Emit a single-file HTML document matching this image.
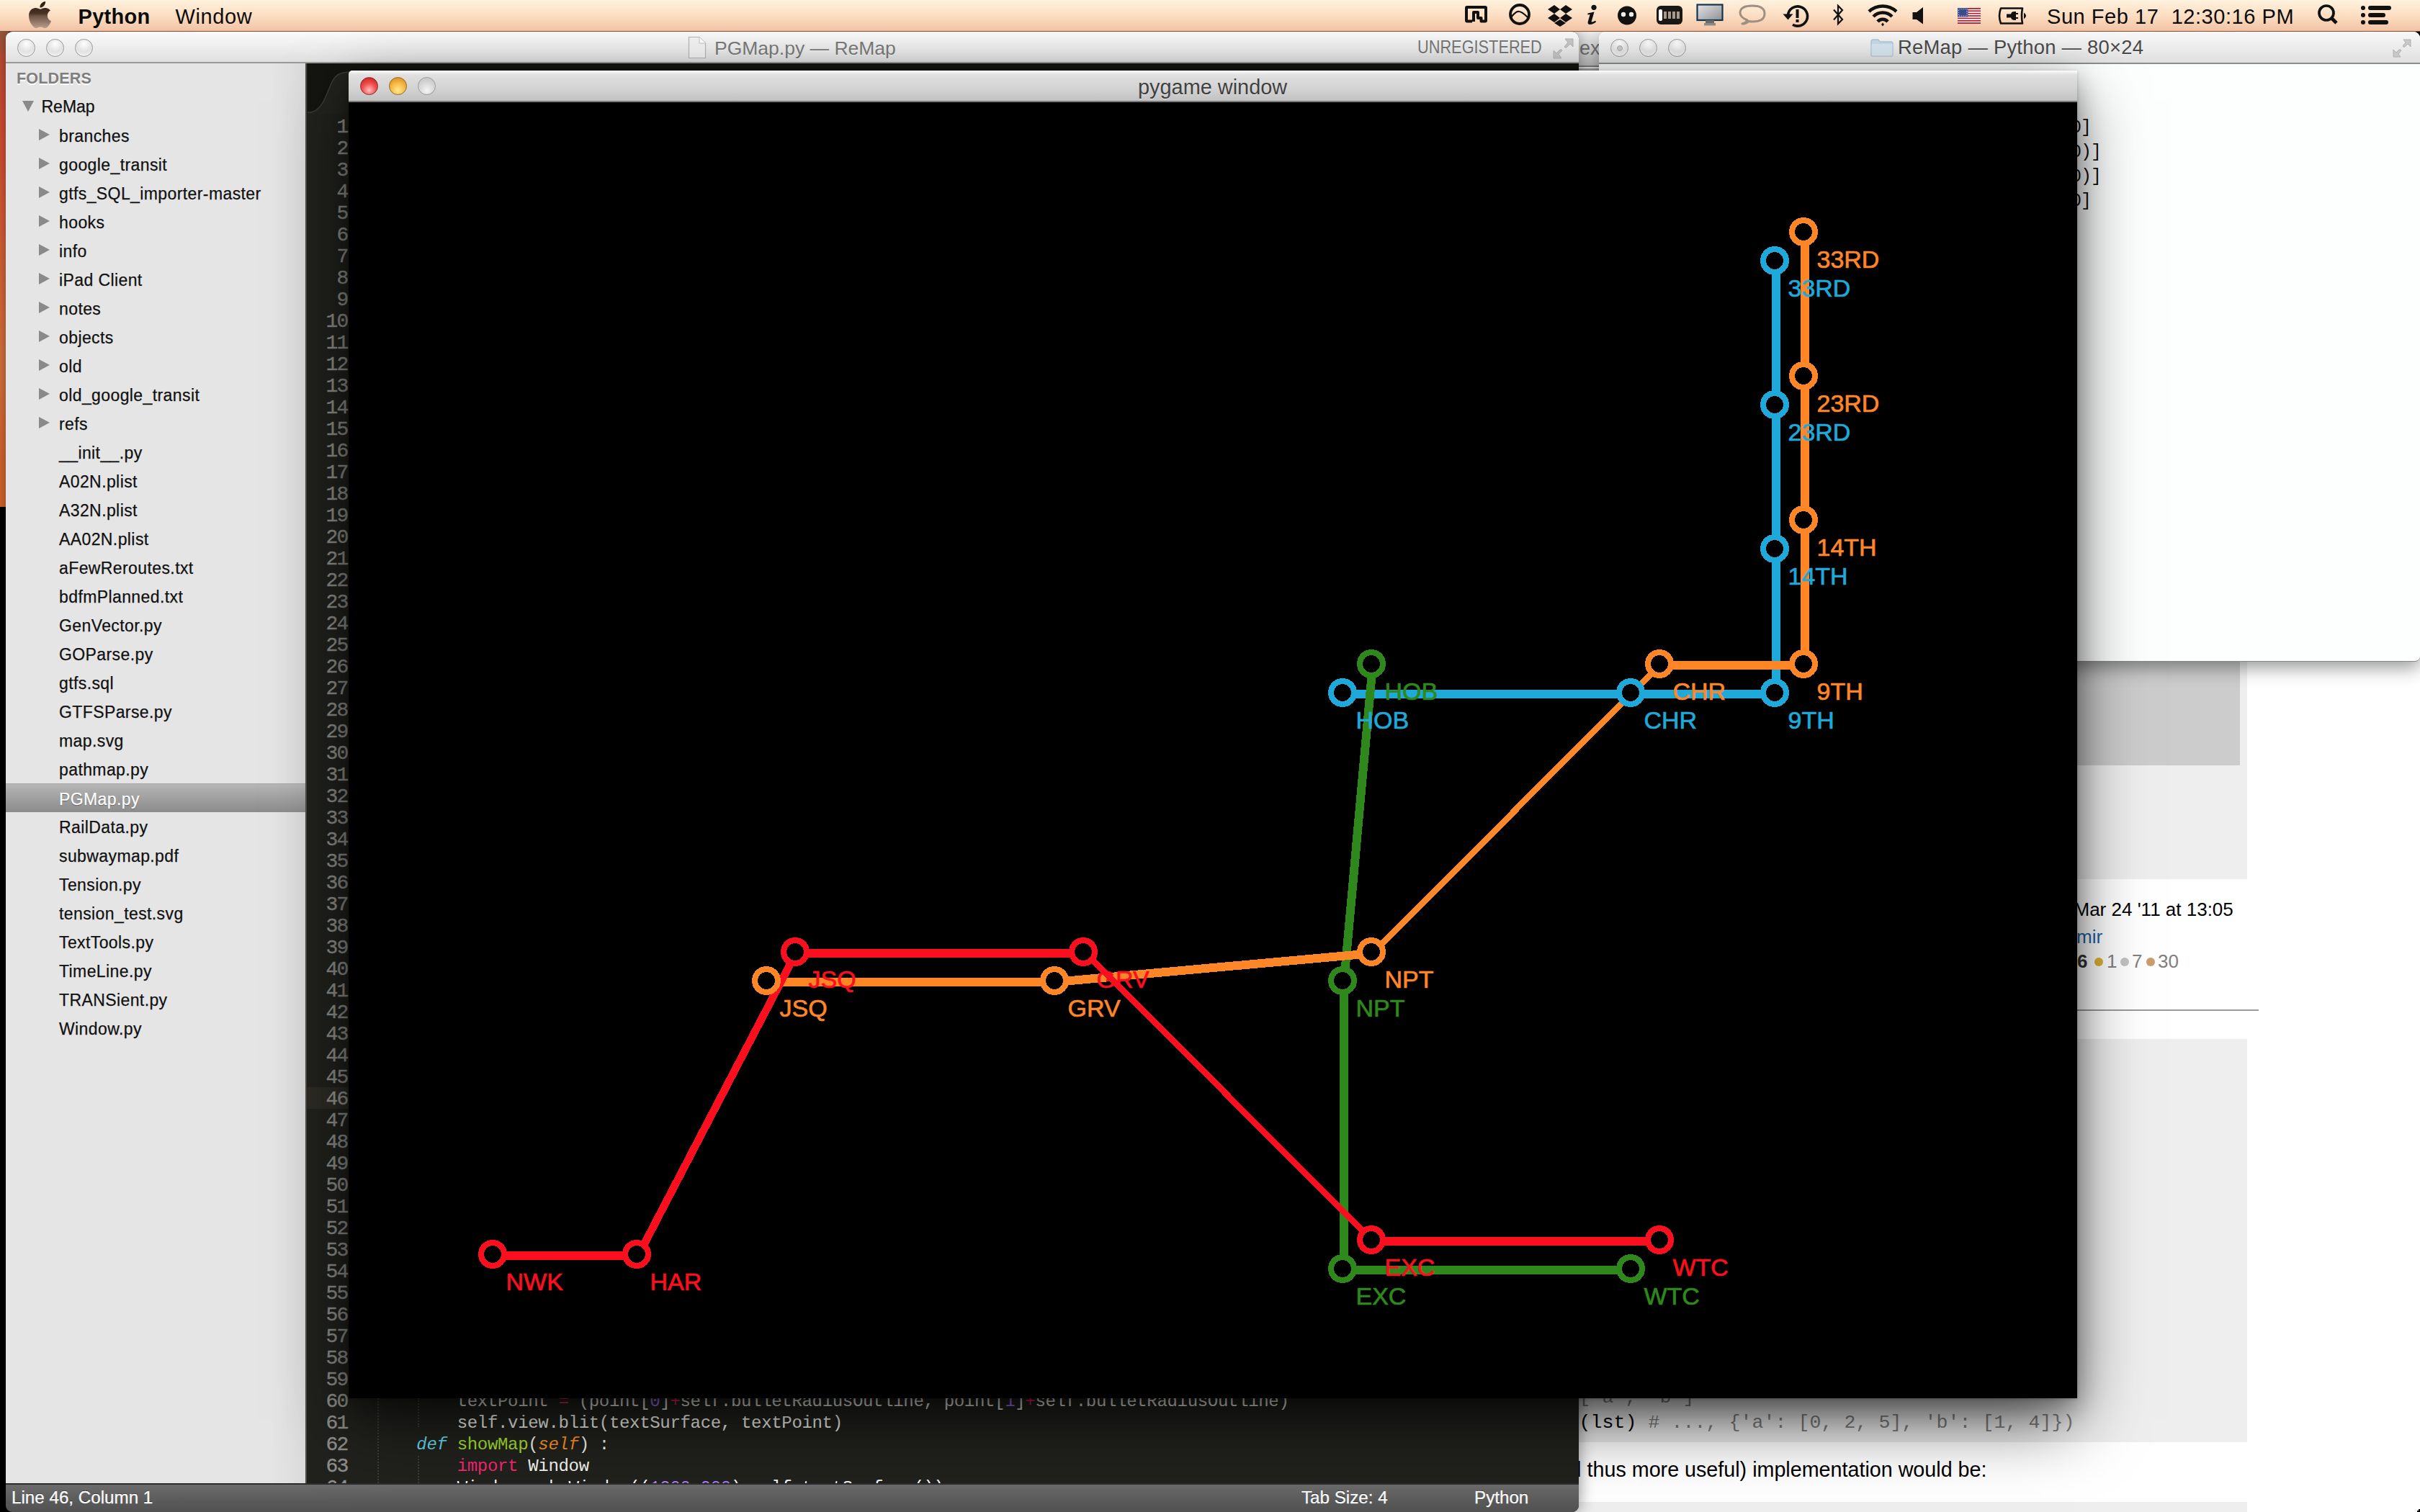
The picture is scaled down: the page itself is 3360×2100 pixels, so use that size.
<!DOCTYPE html>
<html><head><meta charset="utf-8">
<style>
*{margin:0;padding:0;box-sizing:border-box}
html,body{width:3360px;height:2100px;overflow:hidden;background:#000;position:relative;font-family:"Liberation Sans",sans-serif}
/* desktop */
#desk{position:absolute;left:0;top:43px;width:12px;height:661px;background:linear-gradient(#9a5a40,#c85038 6%,#dd5034 20%,#e0643a 45%,#e07840 70%,#df6a30 90%,#e06a30)}
/* menubar */
#menubar{position:absolute;left:0;top:0;width:3360px;height:44px;background:linear-gradient(#fff2de,#fbdcc0 55%,#f2c2a2);border-bottom:1px solid #7d4f3a}
#menubar .m{position:absolute;top:6px;font-size:29px;color:#0c0c0c;line-height:34px;white-space:nowrap}
/* browser behind */
#browser{position:absolute;left:2150px;top:44px;width:1210px;height:2056px;background:#fff;border-radius:10px 10px 0 0;overflow:hidden}
#browser .btb{position:absolute;left:0;top:0;width:100%;height:49px;background:linear-gradient(#f4f4f4,#d0d0d0);border-bottom:2px solid #8a8a8a}
#browser .btb2{position:absolute;left:0;top:51px;width:100%;height:3px;background:#b8b8b8}
.bx{position:absolute;font-family:"Liberation Sans",sans-serif;white-space:nowrap;color:#000}
.bmono{position:absolute;font-family:"Liberation Mono",monospace;white-space:pre;font-size:26.5px;color:#000;letter-spacing:0.1px}
/* terminal */
#term{position:absolute;left:2220px;top:44px;width:1140px;height:875px;background:#fdfefe;border-radius:9px 9px 7px 7px;box-shadow:0 8px 26px rgba(0,0,0,.42);overflow:hidden;border-bottom:1.5px solid #888}
#term .tb{position:absolute;left:0;top:0;width:100%;height:45px;background:linear-gradient(#f8f8f8,#e0e0e0);border-bottom:2px solid #8c8c8c}
#term .tstrip{position:absolute;left:0;top:47px;width:100%;height:6px;background:#e6e8e8;border-bottom:2px solid #b0b0b0}
.tline{position:absolute;font-family:"Liberation Mono",monospace;font-size:25px;letter-spacing:-1px;color:#111;white-space:pre;line-height:34px;text-align:right}
/* sublime */
#subl{position:absolute;left:8px;top:44px;width:2184px;height:2056px;border-radius:9px 9px 9px 9px;overflow:hidden;background:#20201c;box-shadow:0 0 22px rgba(0,0,0,.45)}
#subl .tb{position:absolute;left:0;top:0;width:100%;height:44px;background:linear-gradient(#fafafa,#ececec 55%,#e0e0e0);border-bottom:2px solid #9a9a9a}
#sidebar{position:absolute;left:0;top:44px;width:418px;height:1972px;background:#e5e5e5;border-right:2px solid #4a4a48}
#sidebar:after{content:"";position:absolute;right:0;top:0;width:50px;height:100%;background:linear-gradient(90deg,rgba(0,0,0,0),rgba(0,0,0,.045))}
.srow{position:absolute;left:0;width:416px;height:40px}
.srow .st{position:absolute;left:74px;top:7.5px;font-size:23px;color:#111;white-space:nowrap;letter-spacing:0.4px;-webkit-text-stroke:0.25px currentColor}
.srow .tri{position:absolute;left:46px;top:10.5px;width:0;height:0;border-left:15px solid #8a8a8a;border-top:8.5px solid transparent;border-bottom:8.5px solid transparent}
.srow.sel{background:linear-gradient(#b6b6b6,#a0a0a0 50%,#8c8c8c);border-top:1px solid #a8a8a8}
.srow.sel .st{color:#fff;text-shadow:0 1px 1px #555}
#editor{position:absolute;left:419px;top:44px;width:1765px;height:1972px;background:#21211d}
#tabbar{position:absolute;left:0;top:0;width:100%;height:68px;background:#141410}
.ln{position:absolute;left:419px;width:55.5px;text-align:right;font-family:"Liberation Mono",monospace;font-size:28px;letter-spacing:-1.8px;color:#8f8f8a;line-height:30px;height:30px;-webkit-text-stroke:0.4px #8f8f8a}
.ln.cur{color:#9a9a94}
.code{position:absolute;left:514px;font-family:"Liberation Mono",monospace;font-size:24px;color:#f8f8f2;white-space:pre;line-height:30px;height:30px;letter-spacing:-0.32px}
.kw{color:#f92672}.nu{color:#ae81ff}.fn{color:#a6e22e}.df{color:#66d9ef;font-style:italic}.pa{color:#fd971f;font-style:italic}
.guide{position:absolute;width:0;border-left:2px dotted #3e3e38}
#status{position:absolute;left:0;top:2016px;width:2184px;height:40px;background:linear-gradient(#6c6c6c,#5a5a5a 60%,#525252);border-top:2px solid #2c2c2c}
#status .s{position:absolute;top:4px;font-size:24.2px;color:#fafafa;text-shadow:0 -1px 0 #222;white-space:nowrap;-webkit-text-stroke:0.35px #fafafa}
/* pygame */
#pgshadow{position:absolute;left:484px;top:98px;width:2400px;height:1844px;box-shadow:0 36px 90px -4px rgba(0,0,0,.62),0 14px 34px rgba(0,0,0,.32),0 1px 4px rgba(0,0,0,.2)}
#pg{position:absolute;left:484px;top:98px;width:2400px;height:1844px;overflow:hidden;border-radius:5px 5px 0 0}
#pg .tb{position:absolute;left:0;top:0;width:100%;height:44px;background:linear-gradient(#f6f6f6,#e0e0e0 12%,#d2d2d2 60%,#c2c2c2);border-bottom:2px solid #7a7a7a;border-top:1px solid #fff}
#pg .content{position:absolute;left:0;top:44px;width:2400px;height:1800px;background:#000}
.map{position:absolute;left:0;top:0}
.lbl{position:absolute;font-size:34px;line-height:38px;white-space:nowrap;-webkit-text-stroke:0.7px currentColor}
.btn{position:absolute;width:25px;height:25px;border-radius:50%}
.gbtn{background:radial-gradient(circle at 50% 25%,#fdfdfd,#e2e2e2 55%,#f2f2f2 85%);border:1.5px solid #9a9a9a}
.ttl{position:absolute;font-size:26.5px;color:#7a7a7a;white-space:nowrap;text-shadow:0 1px 0 rgba(255,255,255,.6)}
</style></head><body>
<div id="desk"></div>

<div id="browser">
  <div class="btb"></div><div class="btb2"></div>
  <div class="bx" style="left:43px;top:8px;font-size:27px;color:#787878">ex</div>
  <!-- page content (page x = 2150 + left) -->
  <div style="position:absolute;left:0;top:700px;width:970px;height:477px;background:#eeeeee"></div>
  <div style="position:absolute;left:0;top:700px;width:960px;height:319px;background:#cccccc"></div>
  <div class="bx" style="left:729.5px;top:1204px;font-size:26px">Mar 24 '11 at 13:05</div>
  <div class="bx" style="left:733px;top:1242px;font-size:26px;color:#1a63a8">mir</div>
  <div class="bx" style="left:734px;top:1276px;font-size:26px;color:#333;font-weight:bold">6</div>
  <div style="position:absolute;left:758px;top:1285.5px;width:12px;height:12px;border-radius:50%;background:#dcb232"></div>
  <div class="bx" style="left:775px;top:1276px;font-size:26px;color:#808080">1</div>
  <div style="position:absolute;left:794px;top:1285.5px;width:12px;height:12px;border-radius:50%;background:#c2c2c2"></div>
  <div class="bx" style="left:810px;top:1276px;font-size:26px;color:#808080">7</div>
  <div style="position:absolute;left:830px;top:1285.5px;width:12px;height:12px;border-radius:50%;background:#cc9b6e"></div>
  <div class="bx" style="left:846px;top:1276px;font-size:26px;color:#808080">30</div>
  <div style="position:absolute;left:0;top:1358px;width:986px;height:2px;background:#9a9a9a"></div>
  <div style="position:absolute;left:0;top:1399px;width:970px;height:560px;background:#eeeeee"></div>
  <div class="bmono" style="left:42.5px;top:1882px;color:#808080">['a', 'b']</div>
  <div class="bmono" style="left:42.5px;top:1917px"><span>(lst)</span><span style="color:#808080"> # ..., {'a': [0, 2, 5], 'b': [1, 4]})</span></div>
  <div class="bx" style="left:-2.3px;top:1980.5px;font-size:28.7px">and thus more useful) implementation would be:</div>
  <div style="position:absolute;left:0;top:2042px;width:970px;height:60px;background:#eeeeee"></div>
</div>

<div id="term">
  <div class="tb"></div>
  <div class="btn gbtn" style="left:16px;top:10px"></div>
  <div style="position:absolute;left:25px;top:19px;width:8px;height:8px;border-radius:50%;background:#c8c8c8;border:1px solid #aaa"></div>
  <div class="btn gbtn" style="left:56px;top:10px"></div>
  <div class="btn gbtn" style="left:96px;top:10px"></div>
  <svg style="position:absolute;left:377px;top:9px" width="32" height="26" viewBox="0 0 32 26"><path d="M1 4 Q1 2 3 2 L11 2 L13 5 L29 5 Q31 5 31 7 L31 24 Q31 25 30 25 L2 25 Q1 25 1 24 Z" fill="#c5dbe8" stroke="#9fb3c0" stroke-width="1"/><rect x="1.5" y="8" width="29" height="16.5" fill="#d6e6f0"/></svg>
  <div class="ttl" style="left:415px;top:6px;font-size:27.4px;color:#4a4a4a;letter-spacing:0.25px">ReMap — Python — 80×24</div>
  <svg style="position:absolute;left:1100px;top:8px" width="30" height="30" viewBox="0 0 30 30"><path d="M17 3 L27 3 L27 13 L23 9 L19 13 Q17 14 16 12 L20 7 Z M13 27 L3 27 L3 17 L7 21 L11 17 Q13 16 14 18 L10 23 Z" fill="#c8c8c8" stroke="#b0b0b0" stroke-width="1"/></svg>
  <div class="tline" style="right:457px;top:117px">[100, 200, 300, 500, 700, 900, 1000, 1000, 1000, 1000]</div>
  <div class="tline" style="right:443px;top:151px">[(200, 800), (300, 600), (500, 600), (700, 800), (900, 800)]</div>
  <div class="tline" style="right:443px;top:185px">[(300, 600), (500, 600), (700, 600), (900, 400), (1000, 400)]</div>
  <div class="tline" style="right:457px;top:219px">[100, 200, 300, 500, 700, 900, 1000, 1000, 1000, 1000, 1000]</div>
</div>

<div id="subl">
  <div class="tb"></div>
  <div class="btn gbtn" style="left:16px;top:10px"></div>
  <div class="btn gbtn" style="left:56px;top:10px"></div>
  <div class="btn gbtn" style="left:96px;top:10px"></div>
  <svg style="position:absolute;left:947px;top:6px" width="26" height="32" viewBox="0 0 26 32"><path d="M1.5 1.5 L16 1.5 L24.5 10 L24.5 30.5 L1.5 30.5 Z" fill="#f2f2f2" stroke="#b4b4b4" stroke-width="1.2"/><path d="M16 1.5 L16 10 L24.5 10" fill="#fff" stroke="#c4c4c4" stroke-width="1"/></svg>
  <div class="ttl" style="left:984px;top:8px">PGMap.py — ReMap</div>
  <div class="ttl" style="left:1960px;top:6.5px;font-size:25px;color:#777;letter-spacing:0;transform:scaleX(0.87);transform-origin:0 0">UNREGISTERED</div>
  <svg style="position:absolute;left:2148px;top:9px" width="30" height="30" viewBox="0 0 30 30"><path d="M17 1 L28 1 L28 12 L24 8 L19 13 Q17 14 16 12 L21 6 Z M12 28 L1 28 L1 17 L5 21 L10 16 Q12 15 13 17 L8 22 Z" fill="#c6c6c6" stroke="#b2b2b2" stroke-width="1"/></svg>
  <div id="sidebar">
    <div style="position:absolute;left:15px;top:9px;font-size:21.5px;font-weight:bold;color:#7f7f7f;text-shadow:0 1.5px 0 #fff;letter-spacing:0.2px">FOLDERS</div>
    <div class="srow" style="top:39px"><span style="position:absolute;left:23px;top:13px;border-top:15px solid #8a8a8a;border-left:8.5px solid transparent;border-right:8.5px solid transparent"></span><span class="st" style="left:49.5px;letter-spacing:0;top:7.5px">ReMap</span></div>
  </div>
  <div id="editor">
    <div id="tabbar"></div>
    <svg style="position:absolute;left:0;top:0" width="80" height="70" viewBox="0 0 80 70"><path d="M0 68 L4 68 C18 66 24 50 32 30 C38 16 44 12 60 12 L80 12 L80 70 L0 70 Z" fill="#23231f"/><path d="M0 68 L4 68 C18 66 24 50 32 30 C38 16 44 12 60 12 L80 12" fill="none" stroke="#3c3c37" stroke-width="1.5"/></svg>
  </div>
  <div style="position:absolute;left:418px;top:1466px;width:58px;height:30px;background:#2d2b24"></div>
  <div class="srow" style="top:124px"><span class="tri"></span><span class="st">branches</span></div><div class="srow" style="top:164px"><span class="tri"></span><span class="st">google_transit</span></div><div class="srow" style="top:204px"><span class="tri"></span><span class="st">gtfs_SQL_importer-master</span></div><div class="srow" style="top:244px"><span class="tri"></span><span class="st">hooks</span></div><div class="srow" style="top:284px"><span class="tri"></span><span class="st">info</span></div><div class="srow" style="top:324px"><span class="tri"></span><span class="st">iPad Client</span></div><div class="srow" style="top:364px"><span class="tri"></span><span class="st">notes</span></div><div class="srow" style="top:404px"><span class="tri"></span><span class="st">objects</span></div><div class="srow" style="top:444px"><span class="tri"></span><span class="st">old</span></div><div class="srow" style="top:484px"><span class="tri"></span><span class="st">old_google_transit</span></div><div class="srow" style="top:524px"><span class="tri"></span><span class="st">refs</span></div><div class="srow" style="top:564px"><span class="st">__init__.py</span></div><div class="srow" style="top:604px"><span class="st">A02N.plist</span></div><div class="srow" style="top:644px"><span class="st">A32N.plist</span></div><div class="srow" style="top:684px"><span class="st">AA02N.plist</span></div><div class="srow" style="top:724px"><span class="st">aFewReroutes.txt</span></div><div class="srow" style="top:764px"><span class="st">bdfmPlanned.txt</span></div><div class="srow" style="top:804px"><span class="st">GenVector.py</span></div><div class="srow" style="top:844px"><span class="st">GOParse.py</span></div><div class="srow" style="top:884px"><span class="st">gtfs.sql</span></div><div class="srow" style="top:924px"><span class="st">GTFSParse.py</span></div><div class="srow" style="top:964px"><span class="st">map.svg</span></div><div class="srow" style="top:1004px"><span class="st">pathmap.py</span></div><div class="srow sel" style="top:1044px"><span class="st">PGMap.py</span></div><div class="srow" style="top:1084px"><span class="st">RailData.py</span></div><div class="srow" style="top:1124px"><span class="st">subwaymap.pdf</span></div><div class="srow" style="top:1164px"><span class="st">Tension.py</span></div><div class="srow" style="top:1204px"><span class="st">tension_test.svg</span></div><div class="srow" style="top:1244px"><span class="st">TextTools.py</span></div><div class="srow" style="top:1284px"><span class="st">TimeLine.py</span></div><div class="srow" style="top:1324px"><span class="st">TRANSient.py</span></div><div class="srow" style="top:1364px"><span class="st">Window.py</span></div><div class="ln" style="top:118px">1</div><div class="ln" style="top:148px">2</div><div class="ln" style="top:178px">3</div><div class="ln" style="top:208px">4</div><div class="ln" style="top:238px">5</div><div class="ln" style="top:268px">6</div><div class="ln" style="top:298px">7</div><div class="ln" style="top:328px">8</div><div class="ln" style="top:358px">9</div><div class="ln" style="top:388px">10</div><div class="ln" style="top:418px">11</div><div class="ln" style="top:448px">12</div><div class="ln" style="top:478px">13</div><div class="ln" style="top:508px">14</div><div class="ln" style="top:538px">15</div><div class="ln" style="top:568px">16</div><div class="ln" style="top:598px">17</div><div class="ln" style="top:628px">18</div><div class="ln" style="top:658px">19</div><div class="ln" style="top:688px">20</div><div class="ln" style="top:718px">21</div><div class="ln" style="top:748px">22</div><div class="ln" style="top:778px">23</div><div class="ln" style="top:808px">24</div><div class="ln" style="top:838px">25</div><div class="ln" style="top:868px">26</div><div class="ln" style="top:898px">27</div><div class="ln" style="top:928px">28</div><div class="ln" style="top:958px">29</div><div class="ln" style="top:988px">30</div><div class="ln" style="top:1018px">31</div><div class="ln" style="top:1048px">32</div><div class="ln" style="top:1078px">33</div><div class="ln" style="top:1108px">34</div><div class="ln" style="top:1138px">35</div><div class="ln" style="top:1168px">36</div><div class="ln" style="top:1198px">37</div><div class="ln" style="top:1228px">38</div><div class="ln" style="top:1258px">39</div><div class="ln" style="top:1288px">40</div><div class="ln" style="top:1318px">41</div><div class="ln" style="top:1348px">42</div><div class="ln" style="top:1378px">43</div><div class="ln" style="top:1408px">44</div><div class="ln" style="top:1438px">45</div><div class="ln cur" style="top:1468px">46</div><div class="ln" style="top:1498px">47</div><div class="ln" style="top:1528px">48</div><div class="ln" style="top:1558px">49</div><div class="ln" style="top:1588px">50</div><div class="ln" style="top:1618px">51</div><div class="ln" style="top:1648px">52</div><div class="ln" style="top:1678px">53</div><div class="ln" style="top:1708px">54</div><div class="ln" style="top:1738px">55</div><div class="ln" style="top:1768px">56</div><div class="ln" style="top:1798px">57</div><div class="ln" style="top:1828px">58</div><div class="ln" style="top:1858px">59</div><div class="ln" style="top:1888px">60</div><div class="ln" style="top:1918px">61</div><div class="ln" style="top:1948px">62</div><div class="ln" style="top:1978px">63</div><div class="ln" style="top:2008px">64</div>
  <div class="guide" style="left:516px;top:1898px;height:118px"></div>
  <div class="guide" style="left:572px;top:1898px;height:40px"></div>
  <div class="guide" style="left:572px;top:1978px;height:38px"></div>
  <div class="code" style="top:1887.5px">        textPoint <span class="kw">=</span> (point[<span class="nu">0</span>]<span class="kw">+</span>self.bulletRadiusOutline, point[<span class="nu">1</span>]<span class="kw">+</span>self.bulletRadiusOutline)</div>
  <div class="code" style="top:1917.5px">        self.view.blit(textSurface, textPoint)</div>
  <div class="code" style="top:1947.5px">    <span class="df">def</span> <span class="fn">showMap</span>(<span class="pa">self</span>) :</div>
  <div class="code" style="top:1977.5px">        <span class="kw">import</span> Window</div>
  <div class="code" style="top:2007.5px">        Window.makeWindow((<span class="nu">1200</span>,<span class="nu">900</span>),self.textSurface())</div>
  <div id="status">
    <div class="s" style="left:8px">Line 46, Column 1</div>
    <div class="s" style="left:1799px">Tab Size: 4</div>
    <div class="s" style="left:2039px">Python</div>
  </div>
</div>

<div id="pgshadow"></div>
<div id="pg">
  <div class="tb"></div>
  <div class="btn" style="left:16px;top:9px;background:radial-gradient(circle at 50% 75%,#ffc0c0,#f25050 45%,#d83030 75%,#a02020);border:1px solid #902828"></div>
  <div class="btn" style="left:56px;top:9px;background:radial-gradient(circle at 50% 75%,#ffe890,#f4b840 50%,#dc9830 80%,#a86a18);border:1px solid #9a6a18"></div>
  <div class="btn" style="left:96px;top:9px;background:radial-gradient(circle at 50% 75%,#f4f4f4,#d4d4d4 55%,#c0c0c0);border:1.5px solid #9a9a9a"></div>
  <div class="content"></div>
  <div class="ttl" style="left:1096px;top:6.5px;color:#404040;font-size:28.9px">pygame window</div>
</div>
<div style="position:absolute;left:0;top:0;width:3360px;height:2100px"><svg class="map" width="3360" height="2100" viewBox="0 0 3360 2100" shape-rendering="crispEdges"><polygon points="1864,958 2266,958 2266,970 1864,970" fill="#1fa9da"/><polygon points="2264,958 2466,958 2466,970 2264,970" fill="#1fa9da"/><polygon points="2460,762 2472,762 2472,964 2460,964" fill="#1fa9da"/><polygon points="2460,562 2472,562 2472,764 2460,764" fill="#1fa9da"/><polygon points="2460,362 2472,362 2472,564 2460,564" fill="#1fa9da"/><polygon points="1900,922 1912,922 1872,1364 1860,1364" fill="#2e881c"/><polygon points="1860,1362 1872,1362 1872,1764 1860,1764" fill="#2e881c"/><polygon points="1864,1758 2266,1758 2266,1770 1864,1770" fill="#2e881c"/><polygon points="1064,1358 1466,1358 1466,1370 1064,1370" fill="#ff8626"/><polygon points="1464,1358 1906,1318 1906,1330 1464,1370" fill="#ff8626"/><polygon points="2300,922 2312,922 1912,1324 1900,1324" fill="#ff8626"/><polygon points="2304,918 2506,918 2506,930 2304,930" fill="#ff8626"/><polygon points="2500,722 2512,722 2512,924 2500,924" fill="#ff8626"/><polygon points="2500,522 2512,522 2512,724 2500,724" fill="#ff8626"/><polygon points="2500,322 2512,322 2512,524 2500,524" fill="#ff8626"/><polygon points="684,1738 886,1738 886,1750 684,1750" fill="#fb0f1e"/><polygon points="1100,1322 1112,1322 892,1744 880,1744" fill="#fb0f1e"/><polygon points="1104,1318 1506,1318 1506,1330 1104,1330" fill="#fb0f1e"/><polygon points="1500,1322 1512,1322 1912,1724 1900,1724" fill="#fb0f1e"/><polygon points="1904,1718 2306,1718 2306,1730 1904,1730" fill="#fb0f1e"/><circle cx="1864" cy="962" r="16" fill="#000" stroke="#1fa9da" stroke-width="8"/><circle cx="2264" cy="962" r="16" fill="#000" stroke="#1fa9da" stroke-width="8"/><circle cx="2464" cy="962" r="16" fill="#000" stroke="#1fa9da" stroke-width="8"/><circle cx="2464" cy="762" r="16" fill="#000" stroke="#1fa9da" stroke-width="8"/><circle cx="2464" cy="562" r="16" fill="#000" stroke="#1fa9da" stroke-width="8"/><circle cx="2464" cy="362" r="16" fill="#000" stroke="#1fa9da" stroke-width="8"/><circle cx="1904" cy="922" r="16" fill="#000" stroke="#2e881c" stroke-width="8"/><circle cx="1864" cy="1362" r="16" fill="#000" stroke="#2e881c" stroke-width="8"/><circle cx="1864" cy="1762" r="16" fill="#000" stroke="#2e881c" stroke-width="8"/><circle cx="2264" cy="1762" r="16" fill="#000" stroke="#2e881c" stroke-width="8"/><circle cx="1064" cy="1362" r="16" fill="#000" stroke="#ff8626" stroke-width="8"/><circle cx="1464" cy="1362" r="16" fill="#000" stroke="#ff8626" stroke-width="8"/><circle cx="1904" cy="1322" r="16" fill="#000" stroke="#ff8626" stroke-width="8"/><circle cx="2304" cy="922" r="16" fill="#000" stroke="#ff8626" stroke-width="8"/><circle cx="2504" cy="922" r="16" fill="#000" stroke="#ff8626" stroke-width="8"/><circle cx="2504" cy="722" r="16" fill="#000" stroke="#ff8626" stroke-width="8"/><circle cx="2504" cy="522" r="16" fill="#000" stroke="#ff8626" stroke-width="8"/><circle cx="2504" cy="322" r="16" fill="#000" stroke="#ff8626" stroke-width="8"/><circle cx="684" cy="1742" r="16" fill="#000" stroke="#fb0f1e" stroke-width="8"/><circle cx="884" cy="1742" r="16" fill="#000" stroke="#fb0f1e" stroke-width="8"/><circle cx="1104" cy="1322" r="16" fill="#000" stroke="#fb0f1e" stroke-width="8"/><circle cx="1504" cy="1322" r="16" fill="#000" stroke="#fb0f1e" stroke-width="8"/><circle cx="1904" cy="1722" r="16" fill="#000" stroke="#fb0f1e" stroke-width="8"/><circle cx="2304" cy="1722" r="16" fill="#000" stroke="#fb0f1e" stroke-width="8"/></svg><div class="lbl" style="left:1882.5px;top:980.5px;color:#1fa9da">HOB</div><div class="lbl" style="left:2282.5px;top:980.5px;color:#1fa9da">CHR</div><div class="lbl" style="left:2482.5px;top:980.5px;color:#1fa9da">9TH</div><div class="lbl" style="left:2482.5px;top:780.5px;color:#1fa9da">14TH</div><div class="lbl" style="left:2482.5px;top:580.5px;color:#1fa9da">23RD</div><div class="lbl" style="left:2482.5px;top:380.5px;color:#1fa9da">33RD</div><div class="lbl" style="left:1922.5px;top:940.5px;color:#2e881c">HOB</div><div class="lbl" style="left:1882.5px;top:1380.5px;color:#2e881c">NPT</div><div class="lbl" style="left:1882.5px;top:1780.5px;color:#2e881c">EXC</div><div class="lbl" style="left:2282.5px;top:1780.5px;color:#2e881c">WTC</div><div class="lbl" style="left:1082.5px;top:1380.5px;color:#ff8626">JSQ</div><div class="lbl" style="left:1482.5px;top:1380.5px;color:#ff8626">GRV</div><div class="lbl" style="left:1922.5px;top:1340.5px;color:#ff8626">NPT</div><div class="lbl" style="left:2322.5px;top:940.5px;color:#ff8626">CHR</div><div class="lbl" style="left:2522.5px;top:940.5px;color:#ff8626">9TH</div><div class="lbl" style="left:2522.5px;top:740.5px;color:#ff8626">14TH</div><div class="lbl" style="left:2522.5px;top:540.5px;color:#ff8626">23RD</div><div class="lbl" style="left:2522.5px;top:340.5px;color:#ff8626">33RD</div><div class="lbl" style="left:702.5px;top:1760.5px;color:#fb0f1e">NWK</div><div class="lbl" style="left:902.5px;top:1760.5px;color:#fb0f1e">HAR</div><div class="lbl" style="left:1122.5px;top:1340.5px;color:#fb0f1e">JSQ</div><div class="lbl" style="left:1522.5px;top:1340.5px;color:#fb0f1e">GRV</div><div class="lbl" style="left:1922.5px;top:1740.5px;color:#fb0f1e">EXC</div><div class="lbl" style="left:2322.5px;top:1740.5px;color:#fb0f1e">WTC</div></div>

<div id="menubar">
  <svg style="position:absolute;left:40px;top:2px" width="31" height="37" viewBox="0 0 814 1000" preserveAspectRatio="none"><defs><linearGradient id="ag" x1="0" y1="0" x2="0" y2="1"><stop offset="0" stop-color="#2a1c14"/><stop offset="0.45" stop-color="#4a3224"/><stop offset="0.55" stop-color="#6e5546"/><stop offset="1" stop-color="#b89c8c"/></linearGradient></defs><path fill="url(#ag)" d="M788.1 340.9c-5.8 4.5-108.2 62.2-108.2 190.5 0 148.4 130.3 200.9 134.2 202.2-.6 3.2-20.7 71.9-68.7 141.9-42.8 61.6-87.5 123.1-155.5 123.1s-85.5-39.5-164-39.5c-76.5 0-103.7 40.8-165.9 40.8s-105.6-57-155.5-127C46.7 790.7 0 663 0 541.8c0-194.4 126.4-297.5 250.8-297.5 66.1 0 121.2 43.4 162.7 43.4 39.5 0 101.1-46 176.3-46 28.5 0 130.9 2.6 198.3 99.2zm-234-181.5c31.1-36.9 53.1-88.1 53.1-139.3 0-7.1-.6-14.3-1.9-20.1-50.6 1.9-110.8 33.7-147.1 75.8-28.5 32.4-55.1 83.6-55.1 135.5 0 7.8 1.3 15.6 1.9 18.1 3.2.6 8.4 1.3 13.6 1.3 45.4 0 102.5-30.4 135.5-71.3z"/></svg>
  <div class="m" style="left:108.5px;top:5.5px;font-weight:bold;letter-spacing:0.3px">Python</div>
  <div class="m" style="left:243.5px;top:5.5px;letter-spacing:0.6px">Window</div>
  <div class="m" style="left:2842px;top:6px;letter-spacing:0.55px">Sun Feb 17&nbsp; 12:30:16 PM</div>
  <svg style="position:absolute;left:0;top:0" width="3360" height="43" viewBox="0 0 3360 43">
<g fill="none" stroke="#111" stroke-linejoin="round">
 <!-- 1 share icon -->
 <path d="M2044 29.5 L2037 29.5 Q2036 29.5 2036 28.5 L2036 11 Q2036 10 2037 10 L2062 10 Q2063 10 2063 11 L2063 28.5 Q2063 29.5 2062 29.5 L2056.5 29.5 L2056.5 25 L2052 25 L2052 17 L2046 17 L2046 30" stroke-width="4"/>
 <!-- 2 circle -->
 <circle cx="2110" cy="20" r="13" stroke-width="3.8"/>
 <path d="M2098 24 Q2105 15 2109 16 Q2113 16 2121 24" stroke-width="2.2"/>
 <!-- 8 speech bubble -->
 <path d="M2419 33 Q2425 31 2426 28 Q2416 24 2416 18 Q2416 8 2433 8 Q2450 8 2450 19 Q2450 30 2433 30 Q2430 30 2428 29.5 Q2424 33 2419 33 Z" stroke="#9d9084" stroke-width="3"/>
 <!-- 9 time machine -->
 <path d="M2482.5 20.5 A13.6 13.6 0 1 1 2489 34.2" stroke-width="3.6"/>
 <!-- 10 bluetooth -->
 <path d="M2546 13.5 L2558 27 L2552 33 L2552 8 L2558 14 L2546 27.5" stroke-width="2.2" stroke-linejoin="miter"/>
 <!-- 11 wifi -->
 <path d="M2595 16 A28 28 0 0 1 2633 16" stroke-width="4.5"/>
 <path d="M2601 23 A18 18 0 0 1 2627 23" stroke-width="4.5"/>
 <path d="M2607 30 A9 9 0 0 1 2621 30" stroke-width="4.5"/>
 <!-- 16 battery outline -->
 <path d="M2778 11.5 L2808 11.5 Q2806 22 2808 32.5 L2778 32.5 Q2774 22 2778 11.5 Z" stroke-width="2.6"/>
 <!-- 17 search -->
 <circle cx="3230" cy="18" r="10" stroke-width="3.7"/>
 <path d="M3237 25 L3244 32" stroke-width="4.8" stroke-linecap="butt"/>
</g>
<g fill="#111">
 <path d="M2475.5 19.5 L2489.5 19.5 L2482.5 27.5 Z"/>
 <rect x="2493.5" y="13" width="4" height="12"/><rect x="2493.5" y="27" width="4" height="4"/>
 <!-- dropbox -->
 <path d="M2158 7 L2149 13 L2158 19 L2166 13 Z M2174 7 L2166 13 L2174 19 L2183 13 Z M2158 19 L2149 25 L2158 31 L2166 25 Z M2174 19 L2166 25 L2174 31 L2183 25 Z M2158 32 L2166 27 L2174 32 L2166 37 Z"/>
 <!-- dots -->
 <circle cx="2259" cy="21.5" r="13"/>
 <path d="M2655.5 17 L2661 17 L2670 10 L2670 33.5 L2661 27 L2655.5 27 Z"/>
 <path d="M2612 34 L2614 36.5 L2616 34 L2614 31.5 Z"/>
 <!-- plug -->
 <path d="M2786 19.5 L2792 19.5 Q2793 16 2797 16 L2799 16 L2799 18 L2802 18 L2802 20 L2799 20 L2799 24 L2802 24 L2802 26 L2799 26 L2799 28 L2797 28 Q2793 28 2792 24.5 L2786 24.5 Z"/>
 <path d="M2810 17.5 Q2816 22 2810 26.5 Z"/>
 <!-- list -->
 <circle cx="3281" cy="11" r="3"/><circle cx="3281" cy="21" r="3"/><circle cx="3281" cy="31" r="3"/>
 <rect x="3288" y="8" width="32" height="6" rx="3"/><rect x="3288" y="18" width="24" height="6" rx="3"/><rect x="3288" y="28" width="28" height="6" rx="3"/>
</g>
<circle cx="2254" cy="20" r="3.2" fill="#eee"/><circle cx="2265" cy="20" r="3.2" fill="#eee"/>
<circle cx="2213" cy="10.3" r="3.6" fill="#111"/><path d="M2204.5 18.5 L2213.5 16.5 L2209.6 30 Q2210.5 31.5 2215 28.8 L2216.2 30.3 Q2211 34.8 2206.5 34 Q2204 33.2 2204.8 30 L2207.6 20 L2204.3 20.6 Z" fill="#111"/>
<!-- istat -->
<rect x="2300" y="8" width="36" height="26" rx="6" fill="#1a1714"/>
<rect x="2303" y="13" width="5" height="16" rx="2" fill="#fff"/>
<rect x="2310" y="16" width="4" height="10" fill="#a89a8a"/><rect x="2316" y="16" width="4" height="10" fill="#a89a8a"/><rect x="2322" y="16" width="4" height="10" fill="#a89a8a"/><rect x="2328" y="16" width="4" height="10" fill="#a89a8a"/>
<!-- monitor -->
<defs><linearGradient id="mg" x1="0" y1="0" x2="1" y2="1"><stop offset="0" stop-color="#e4e4e6"/><stop offset="1" stop-color="#8e9094"/></linearGradient>
<linearGradient id="fl" x1="0" y1="0" x2="0" y2="1"><stop offset="0" stop-color="#b22234"/><stop offset="1" stop-color="#8a1020"/></linearGradient></defs>
<rect x="2356.5" y="6.5" width="35" height="21.5" fill="url(#mg)" stroke="#0f3550" stroke-width="2.2"/>
<rect x="2368" y="28" width="12" height="5" fill="#6a6a6a"/><rect x="2366" y="32" width="16" height="3.5" fill="#8a8a8a"/>
<!-- flag -->
<rect x="2718" y="11" width="32" height="22" fill="#fff"/>
<g fill="#b51c2c"><rect x="2718" y="11" width="32" height="1.8"/><rect x="2718" y="14.4" width="32" height="1.7"/><rect x="2718" y="17.8" width="32" height="1.7"/><rect x="2718" y="21.2" width="32" height="1.7"/><rect x="2718" y="24.6" width="32" height="1.7"/><rect x="2718" y="28" width="32" height="1.7"/><rect x="2718" y="31.2" width="32" height="1.8"/></g>
<rect x="2718" y="11" width="14.5" height="12.5" fill="#3a4a8c"/>
<rect x="2719.5" y="12.5" width="11.5" height="9.5" fill="none" stroke="#c8cce0" stroke-width="1.2" stroke-dasharray="1.2 1.6"/>
</svg>
</div>
<div style="position:absolute;left:3358px;top:2096px;width:2px;height:4px;background:#000"></div><div style="position:absolute;left:3356px;top:2098px;width:4px;height:2px;background:#000"></div>
</body></html>
